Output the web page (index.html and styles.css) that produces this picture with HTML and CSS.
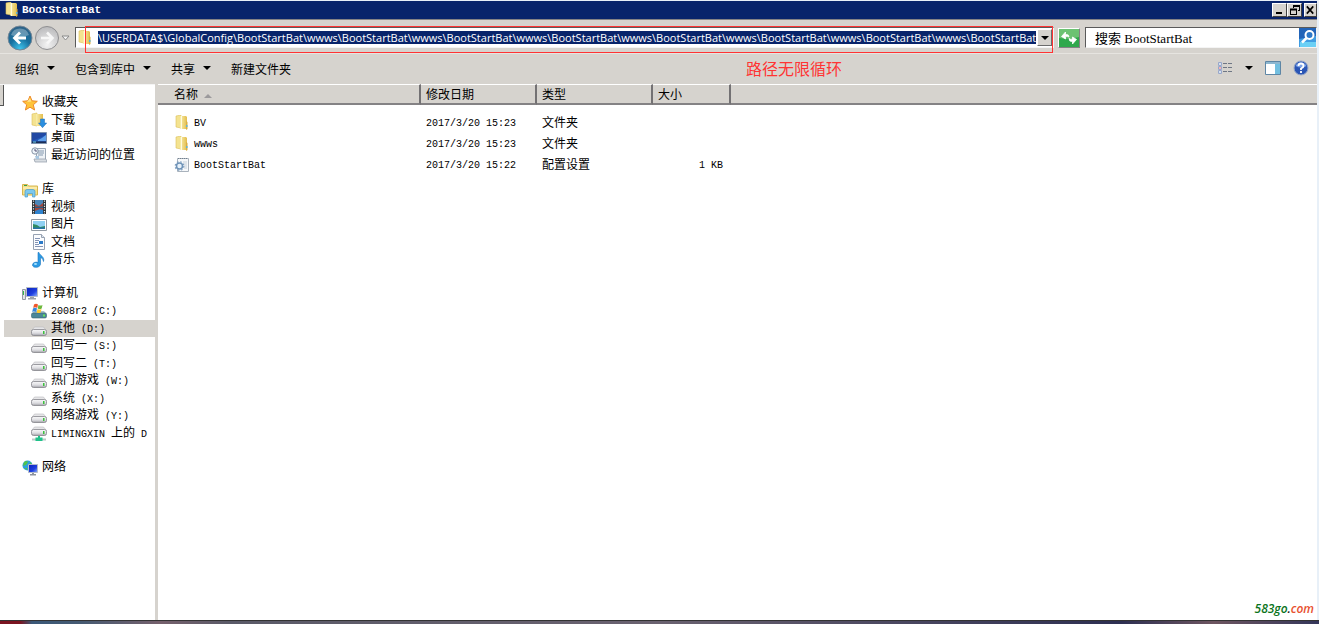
FILE: index.html
```html
<!DOCTYPE html>
<html lang="zh-CN">
  <head>
    <meta charset="utf-8">
    <title>BootStartBat</title>
    <link rel="stylesheet" href="styles.css">
  </head>

  <body>
    <svg class="sprite" aria-hidden="true">
      <defs>
        <linearGradient id="gold" x1="0" x2="1">
          <stop offset="0" stop-color="#f9efae"/><stop offset="1" stop-color="#e3bd4c"/>
        </linearGradient>
        <linearGradient id="metal" x1="0" y1="0" x2="0" y2="1">
          <stop offset="0" stop-color="#fafafb"/><stop offset=".6" stop-color="#dcdce0"/><stop offset="1" stop-color="#a2a2a8"/>
        </linearGradient>
        <linearGradient id="screen" x1="0" x2="1" y2="1">
          <stop offset="0" stop-color="#0a22b8"/><stop offset=".6" stop-color="#1f3fe0"/><stop offset="1" stop-color="#8fb4ff"/>
        </linearGradient>
        <radialGradient id="blueBall" cx=".5" cy=".95" r=".9">
          <stop offset="0" stop-color="#3fc4ec"/><stop offset=".5" stop-color="#17709f"/><stop offset="1" stop-color="#2c6288"/>
        </radialGradient>
        <radialGradient id="greyBall" cx=".5" cy=".8" r=".8">
          <stop offset="0" stop-color="#f2f2f2"/><stop offset="1" stop-color="#b9b9bb"/>
        </radialGradient>
      </defs>
      <symbol id="folder" viewBox="0 0 16 16">
        <path d="M2 1l5-1v13l-5-1z" fill="#f4e390" stroke="#dcc05a" stroke-width=".6"/>
        <path d="M6 1h6l1 1v12H7l-1-1z" fill="url(#gold)"/>
        <path d="M7.500 1v13" stroke="#fffbe0"/>
        <path d="M12 6l1.500 1v7L12 15z" fill="#d9ae43"/>
        <path d="M12 10h1.500v2H12z" fill="#5db3d8"/>
      </symbol>
      <symbol id="star" viewBox="0 0 16 16">
        <path d="M8 1l2 4.800 5.300.5-4 3.500 1.300 5.200L8 12.200 3.400 15l1.300-5.200-4-3.500L6 5.800z" fill="#ffc43a" stroke="#ee8a2a"/>
        <path d="M8 3l1.200 3.500L5 7z" fill="#ffe58a"/>
      </symbol>
      <symbol id="download" viewBox="0 0 16 16">
        <path d="M1 2l5-1v13l-5-1z" fill="#f4e390" stroke="#dcc05a" stroke-width=".6"/>
        <path d="M5 2h7v12H6l-1-1z" fill="url(#gold)"/>
        <path d="M9.500 7h4v4h2.200L11.500 15.700 7.500 11h2z" fill="#2b8fe0" stroke="#1c6fb8" stroke-width=".5"/>
      </symbol>
      <symbol id="desktop" viewBox="0 0 16 16">
        <path d="M.5 2.500h15v11H.5z" fill="#2458b8" stroke="#7c90ad"/>
        <path d="M1 3h14v2L1 11z" fill="#2149a4"/>
        <path d="M7 10c3-1 5-3 8-5v6H7z" fill="#5fa0ea"/>
        <path d="M1 11.500h14V13H1z" fill="#1d2f55"/>
        <path d="M2 12h3" stroke="#6fd3f0"/>
      </symbol>
      <symbol id="recent" viewBox="0 0 16 16">
        <path d="M5.500 1.500h9v11h-9z" fill="#eef2f6" stroke="#9aa7b5"/>
        <path d="M7 4h6M7 6h6M7 8h5" stroke="#8297ae"/>
        <circle cx="4" cy="4" r="3.200" fill="#eef4fa" stroke="#8794a5"/>
        <path d="M4 2v2h2" fill="none" stroke="#557"/>
        <path d="M3 12h12l1 3H4z" fill="#d8dde2" stroke="#8f9aa6" stroke-width=".7"/>
        <path d="M4 9h4v3H5z" fill="#a9c7e0"/>
      </symbol>
      <symbol id="library" viewBox="0 0 16 16">
        <path d="M.5 13V2.500h5l1 1.500h9v9z" fill="#f5e08a" stroke="#d7b64f"/>
        <path d="M2 3.500h3" stroke="#35a24b"/>
        <path d="M1 6h14" stroke="#fff6c8"/>
        <path d="M3 15V9.500Q3 7.500 5 7.500h6q2 0 2 2V15h-2.500v-3.500h-5V15z" fill="#7cc8ee" stroke="#4a9ccc" stroke-width=".7"/>
      </symbol>
      <symbol id="video" viewBox="0 0 16 16">
        <path d="M1 1h14v14H1z" fill="#2d3338"/>
        <path d="M4 1h8v6.500H4z" fill="#4b86b8"/><path d="M4 8.500h8V15H4z" fill="#2f83cf"/>
        <path d="M4 5l4 2 4-3v3.500H4zM4 12l5-2 3 1v-2H4z" fill="#a1483e"/>
        <path d="M2.500 1.500v14M13.500 1.500v14" stroke="#dfe5ea" stroke-width="1.200" stroke-dasharray="1.300 1.300"/>
      </symbol>
      <symbol id="picture" viewBox="0 0 16 16">
        <path d="M.5 2.500h15v11H.5z" fill="#fff" stroke="#929ba5"/>
        <path d="M2 4h12v8H2z" fill="#8fd0f2"/>
        <path d="M2 7l4 1 3 2 5-1v3H2z" fill="#2f8b62"/><path d="M2 10.500h12V12H2z" fill="#2673a8"/>
      </symbol>
      <symbol id="document" viewBox="0 0 16 16">
        <path d="M2.500.5h8l3 3v12h-11z" fill="#fbfcfe" stroke="#97a2b2"/>
        <path d="M10.500.5v3h3" fill="#dde6ef" stroke="#97a2b2"/>
        <path d="M4 4.500h5M4 6.500h4M4 8.500h3M4 10.500h4M4 12.500h8" stroke="#8494b4"/>
        <path d="M8 7h4v3H8z" fill="#2b7ac8"/>
      </symbol>
      <symbol id="music" viewBox="0 0 16 16">
        <path d="M8 .5c.5 3 6 4 4.500 9-.5-3-2-3.500-3-4V12c0 4-8 4.500-8 1 0-2.500 3.500-3.500 5.500-2.500V.5z" fill="#2c9be4" stroke="#1b76c0" stroke-width=".6"/>
        <ellipse cx="4.500" cy="12" rx="1.500" ry="1" fill="#a8e2ff"/>
      </symbol>
      <symbol id="computer" viewBox="0 0 16 16">
        <path d="M.5 3.500h3v10h-3z" fill="#e2e4e8" stroke="#9499a3"/>
        <path d="M1.500 5v4" stroke="#36b748"/>
        <path d="M4.500 1.500h11v9h-11z" fill="url(#screen)" stroke="#b5bcc9"/>
        <path d="M8 11h4v1h2v1.500H6V12h2z" fill="#9ba1aa"/>
      </symbol>
      <symbol id="drive" viewBox="0 0 16 16">
        <path d="M3.500 6h9l3 4H.5z" fill="#e6e6e8" stroke="#b8b8bc" stroke-width=".6"/>
        <rect x=".5" y="8.500" width="15" height="6" rx="2" fill="url(#metal)" stroke="#85858c" stroke-width=".8"/>
        <path d="M12 10h1.500v3H12z" fill="#3cc23c"/>
      </symbol>
      <symbol id="system" viewBox="0 0 16 16">
        <path d="M3 8h10l2.500 3H.5z" fill="#a7c3cf"/>
        <rect x=".5" y="10" width="15" height="5" rx="1.500" fill="#4a8798" stroke="#37616e" stroke-width=".6"/>
        <path d="M12 11.500h2v2h-2z" fill="#62e45b"/>
        <path d="M3 1.500q2-1.500 4 0l-.8 3.500q-2-1.500-4 0z" fill="#f0562a"/><path d="M7.500 2q2 1 4 0l-.8 3.500q-2 1-4 0z" fill="#6cb83c"/>
        <path d="M2 5.500q2-1.500 4 0L5.200 9q-2-1.500-4 0z" fill="#3587de"/><path d="M6.500 6q2 1 4 0l-.8 3.500q-2 1-4 0z" fill="#fcc82d"/>
      </symbol>
      <symbol id="netdrive" viewBox="0 0 16 16">
        <path d="M3.500 1h9l3 3.500H.5z" fill="#e6e6e8" stroke="#b8b8bc" stroke-width=".6"/>
        <rect x=".5" y="3.500" width="15" height="6" rx="2" fill="url(#metal)" stroke="#85858c" stroke-width=".8"/>
        <path d="M12 5h1.500v3H12z" fill="#3cc23c"/>
        <path d="M1 13.500h14" stroke="#b9c9c4" stroke-width="2"/>
        <path d="M7 10h2v1.500h2.500v3.500h-7v-3.500H7z" fill="#1fc28a"/>
      </symbol>
      <symbol id="network" viewBox="0 0 16 16">
        <circle cx="5.500" cy="5.500" r="5" fill="#2d9fe0"/>
        <path d="M2 2q3-2 4 0L4 5 1 6zM6 5l3-3 1 3-3 3zM2 8l3 0v2z" fill="#50c34c"/>
        <path d="M6.500 4.500h9v8h-9z" fill="url(#screen)" stroke="#b5bcc9"/>
        <path d="M10 13h2v1h2v1.500H8V14h2z" fill="#8d939d"/>
      </symbol>
      <symbol id="config" viewBox="0 0 16 16">
        <path d="M3.500 1.500h11v13h-11z" fill="#f6f8fa" stroke="#a9b2bc"/>
        <path d="M4 1.500h10" stroke="#72808e" stroke-dasharray="1 1"/>
        <path d="M9 5h4M10 7h3M10 9h3M10 11h3" stroke="#c6d0da"/>
        <circle cx="5.500" cy="9" r="4.300" fill="none" stroke="#84a3c2" stroke-width="1.200" stroke-dasharray="1.700 1.700"/>
        <circle cx="5.500" cy="9" r="3" fill="#e8f2fa" stroke="#6f93b8" stroke-width="1.500"/>
      </symbol>
    </svg>

    <div class="window">
      <header class="titlebar">
        <svg class="icon"><use href="#folder"/></svg>
        <h1>BootStartBat</h1>
        <div class="window-buttons">
          <button aria-label="最小化"><svg viewBox="0 0 12 10"><path d="M2 7h6v2H2z"/></svg></button>
          <button aria-label="还原"><svg viewBox="0 0 12 10"><path d="M4 0h7v6H9V5h1V2H5v1H4zM1 3.500h7V10H1zM2 5.500V9h5V5.500z" fill-rule="evenodd"/></svg></button>
          <button aria-label="关闭"><svg viewBox="0 0 12 10"><path d="M2 1l7 8M9 1L2 9" stroke="#000" stroke-width="1.800"/></svg></button>
        </div>
      </header>

      <div class="navbar">
        <div class="history">
          <button aria-label="后退">
            <svg viewBox="0 0 26 26"><circle cx="13" cy="13" r="12" fill="url(#blueBall)" stroke="#748696"/><path d="M4 10a9.500 9.500 0 0 1 18 0q-9 4-18 0z" fill="#fff" opacity=".3"/><path d="M19 13H8M13 7.500L7.500 13l5.500 5.500" fill="none" stroke="#fff" stroke-width="2.800"/></svg>
          </button>
          <button aria-label="前进">
            <svg viewBox="0 0 26 26"><circle cx="13" cy="13" r="11.500" fill="url(#greyBall)" stroke="#8f8f91"/><path d="M7 13h11M13 7.500l5.500 5.500-5.500 5.500" fill="none" stroke="#f7f7f7" stroke-width="2.500"/></svg>
          </button>
          <button class="recent-pages" aria-label="最近的页面">
            <svg viewBox="0 0 9 6"><path d="M1 1h7L4.500 5z" fill="#f4f4f4" stroke="#8a8a8a"/></svg>
          </button>
        </div>

        <div class="address">
          <svg class="icon"><use href="#folder"/></svg>
          <input type="text" aria-label="地址" value="\USERDATA$\GlobalConfig\BootStartBat\wwws\BootStartBat\wwws\BootStartBat\wwws\BootStartBat\wwws\BootStartBat\wwws\BootStartBat\wwws\BootStartBat\wwws\BootStartBat">
          <button class="drop" aria-label="以前的位置"><span class="arrow"></span></button>
          <div class="marker"></div>
        </div>

        <button class="refresh" aria-label="刷新">
          <svg viewBox="0 0 20 18"><path d="M0 0h20v18H0z" fill="#2fa84c"/><path d="M0 0h20v8Q10 11 0 9z" fill="#6cc272"/><path d="M2.500 7.500L6.500 3v2.500q3.500-.5 3.500 2.500-1.500-1-3.500-.5V10z" fill="#fff" stroke="#fff" stroke-width=".8"/><path d="M17.500 10.500L13.500 15v-2.500q-3.500.5-3.500-3 1.500 1 3.500.5V8z" fill="#fff" stroke="#fff" stroke-width=".8"/></svg>
        </button>

        <div class="search">
          <input type="text" class="search-text" aria-label="搜索" value="搜索 BootStartBat">
          <button aria-label="开始搜索">
            <svg viewBox="0 0 17 19"><path d="M0 0h17v19H0z" fill="#3f9ce2"/><path d="M0 0h17v8L0 11z" fill="#2264b8"/><path d="M1 14h16v5H1z" fill="#6bd0f5"/><circle cx="10.500" cy="7" r="4" fill="#2d78c8" stroke="#fff" stroke-width="2"/><path d="M7.500 10L3 14.500" stroke="#fff" stroke-width="2.500"/></svg>
          </button>
        </div>
      </div>

      <div class="toolbar">
        <button>组织<span class="arrow"></span></button>
        <button>包含到库中<span class="arrow"></span></button>
        <button>共享<span class="arrow"></span></button>
        <button>新建文件夹</button>
        <p class="note">路径无限循环</p>
        <div class="view-tools">
          <button aria-label="更改视图"><svg class="icon" viewBox="0 0 16 16"><path d="M1.500 2.500h3v3h-3zM1.500 6.500h3v3h-3zM1.500 10.500h3v3h-3z" fill="#fff" stroke="#98a7cb"/><path d="M2.500 8h1" stroke="#e33" stroke-width="1.500"/><path d="M2.500 4h1M2.500 12h1" stroke="#58b"/><path d="M6 3.500h4M11 3.500h4M6 7.500h4M11 7.500h4M6 11.500h4M11 11.500h4" stroke="#6f7785"/></svg></button>
          <button aria-label="更多选项"><span class="arrow"></span></button>
          <button aria-label="显示预览窗格"><svg class="icon" viewBox="0 0 16 16"><path d="M.5 1.500h15v13H.5z" fill="#fff" stroke="#5e86a5"/><path d="M1 3h14" stroke="#8db7d0" stroke-width="2"/><path d="M10 4h5v10h-5z" fill="#72bfe0"/></svg></button>
          <button aria-label="获取帮助"><svg class="icon" viewBox="0 0 16 16"><circle cx="8" cy="8" r="7" fill="#2a55b5" stroke="#9aa9c8"/><path d="M2.500 6a6 6 0 0 1 11 0q-5 3-11 0z" fill="#7ba1e6"/><path d="M5.500 6q0-2.500 2.500-2.500T10.500 6Q10.500 7.500 8 8.500v1.500M8 11v2" fill="none" stroke="#fff" stroke-width="1.800"/></svg></button>
        </div>
      </div>

      <div class="content">
        <nav class="sidebar">
          <ul>
            <li class="root"><svg class="icon"><use href="#star"/></svg><a href="#">收藏夹</a></li>
            <li><svg class="icon"><use href="#download"/></svg><a href="#">下载</a></li>
            <li><svg class="icon"><use href="#desktop"/></svg><a href="#">桌面</a></li>
            <li><svg class="icon"><use href="#recent"/></svg><a href="#">最近访问的位置</a></li>
          </ul>
          <ul>
            <li class="root"><svg class="icon"><use href="#library"/></svg><a href="#">库</a></li>
            <li><svg class="icon"><use href="#video"/></svg><a href="#">视频</a></li>
            <li><svg class="icon"><use href="#picture"/></svg><a href="#">图片</a></li>
            <li><svg class="icon"><use href="#document"/></svg><a href="#">文档</a></li>
            <li><svg class="icon"><use href="#music"/></svg><a href="#">音乐</a></li>
          </ul>
          <ul>
            <li class="root"><svg class="icon"><use href="#computer"/></svg><a href="#">计算机</a></li>
            <li><svg class="icon"><use href="#system"/></svg><a href="#"><span class="mono">2008r2 (C:)</span></a></li>
            <li class="selected"><svg class="icon"><use href="#drive"/></svg><a href="#">其他<span class="mono"> (D:)</span></a></li>
            <li><svg class="icon"><use href="#drive"/></svg><a href="#">回写一<span class="mono"> (S:)</span></a></li>
            <li><svg class="icon"><use href="#drive"/></svg><a href="#">回写二<span class="mono"> (T:)</span></a></li>
            <li><svg class="icon"><use href="#drive"/></svg><a href="#">热门游戏<span class="mono"> (W:)</span></a></li>
            <li><svg class="icon"><use href="#drive"/></svg><a href="#">系统<span class="mono"> (X:)</span></a></li>
            <li><svg class="icon"><use href="#drive"/></svg><a href="#">网络游戏<span class="mono"> (Y:)</span></a></li>
            <li><svg class="icon"><use href="#netdrive"/></svg><a href="#"><span class="mono">LIMINGXIN </span>上的<span class="mono"> D</span></a></li>
          </ul>
          <ul>
            <li class="root"><svg class="icon"><use href="#network"/></svg><a href="#">网络</a></li>
          </ul>
        </nav>

        <main class="files">
          <table>
            <colgroup>
              <col class="col-name"><col class="col-date"><col class="col-type"><col class="col-size"><col>
            </colgroup>
            <thead>
              <tr><th>名称<span class="sort"></span></th><th>修改日期</th><th>类型</th><th>大小</th><th class="rest"></th></tr>
            </thead>
            <tbody>
              <tr><td><div class="file"><svg class="icon"><use href="#folder"/></svg><span class="mono">BV</span></div></td><td class="mono">2017/3/20 15:23</td><td>文件夹</td><td></td><td></td></tr>
              <tr><td><div class="file"><svg class="icon"><use href="#folder"/></svg><span class="mono">wwws</span></div></td><td class="mono">2017/3/20 15:23</td><td>文件夹</td><td></td><td></td></tr>
              <tr><td><div class="file"><svg class="icon"><use href="#config"/></svg><span class="mono">BootStartBat</span></div></td><td class="mono">2017/3/20 15:22</td><td>配置设置</td><td class="mono size">1 KB</td><td></td></tr>
            </tbody>
          </table>
          <p class="watermark">583go<span class="dot">.</span><span class="com">com</span></p>
        </main>
      </div>
    </div>
    <div class="desktop-strip"></div>
  </body>
</html>
```
FILE: styles.css
```css
* {
  box-sizing: border-box;
}

body {
  margin: 0;
  min-height: 100vh;
  display: flex;
  flex-direction: column;
  background-color: #e8f0f8;
  color: #000;
  font-family: "Liberation Sans", "Noto Sans CJK SC", sans-serif;
  font-size: 12px;
}

h1, p, ul {
  margin: 0;
  padding: 0;
}

button {
  display: flex;
  align-items: center;
  justify-content: center;
  margin: 0;
  padding: 0;
  border: none;
  background: none;
  color: #000;
  font: inherit;
}

input {
  min-width: 0;
  border: none;
  padding: 0;
  outline: none;
}

.sprite {
  position: absolute;
  width: 0;
  height: 0;
}

.icon {
  display: block;
  flex: none;
  width: 16px;
  height: 16px;
}

.mono {
  font-family: "Liberation Mono", monospace;
  font-size: 10px;
  white-space: pre;
}

.arrow {
  border: 4px solid transparent;
  border-top-color: #000;
  border-bottom: none;
}

.window {
  flex: 1;
  display: flex;
  flex-direction: column;
  margin-top: 1px;
  margin-right: 2px;
  background-color: #d6d3ce;
}

/* title bar */
.titlebar {
  display: flex;
  align-items: center;
  height: 18px;
  padding-left: 4px;
  background-color: #08246b;
}

.titlebar h1 {
  flex: 1;
  margin-left: 2px;
  color: #fff;
  font-family: "Liberation Mono", monospace;
  font-size: 11px;
  font-weight: bold;
}

.window-buttons {
  display: flex;
}

.window-buttons button {
  width: 15px;
  height: 14px;
  border: 1px solid;
  border-color: #fff #404040 #404040 #fff;
  background-color: #d6d3ce;
}

.window-buttons button:last-child {
  width: 13px;
  margin-left: 2px;
}

.window-buttons svg {
  width: 12px;
  height: 10px;
}

/* address and search */
.navbar {
  display: flex;
  align-items: center;
  height: 35px;
  padding: 2px 0 0 7px;
  border-top: 1px solid #848284;
  border-bottom: 1px solid #e6e4e0;
}

.history {
  display: flex;
  align-items: center;
  width: 68px;
  gap: 1px;
}

.history svg {
  width: 26px;
  height: 26px;
}

.history .recent-pages svg {
  width: 9px;
  height: 6px;
}

.address {
  position: relative;
  flex: 1;
  display: flex;
  align-items: center;
  height: 21px;
  padding: 1px;
  border: 1px solid;
  border-color: #5a5a5a #f4f4f4 #f4f4f4 #5a5a5a;
  background-color: #fff;
}

.address input {
  flex: 1;
  height: 13px;
  margin-left: 5px;
  background-color: #08246b;
  color: #fff;
  font-family: "Open Sans", sans-serif;
  font-size: 11px;
  line-height: 13px;
}

.address .drop {
  width: 15px;
  height: 17px;
  margin-left: 1px;
  border: 1px solid;
  border-color: #fff #6b6b6b #6b6b6b #fff;
  background-color: #d6d3ce;
}

.marker {
  position: absolute;
  top: -2px;
  right: 0;
  bottom: -6px;
  left: 9px;
  border: 1px solid #ff3333;
  pointer-events: none;
}

.refresh {
  width: 22px;
  height: 20px;
  margin: 0 5px 0 4px;
  border: 1px solid;
  border-color: #fff #848284 #848284 #fff;
}

.refresh svg {
  width: 20px;
  height: 18px;
}

.search {
  display: flex;
  align-items: center;
  width: 232px;
  height: 21px;
  border: 1px solid;
  border-color: #5a5a5a #f4f4f4 #f4f4f4 #5a5a5a;
  background-color: #fff;
}

.search-text {
  flex: 1;
  height: 19px;
  padding-left: 9px;
  font-family: "Liberation Serif", "Noto Sans CJK SC", serif;
  font-size: 13px;
}

.search svg {
  width: 17px;
  height: 19px;
}

/* toolbar */
.toolbar {
  position: relative;
  display: flex;
  align-items: center;
  gap: 20px;
  height: 30px;
  padding: 0 8px 2px 15px;
}

.toolbar button {
  gap: 8px;
}

.note {
  position: absolute;
  top: 6px;
  left: 746px;
  color: #ff3333;
  font-size: 16px;
  line-height: 20px;
}

.view-tools {
  display: flex;
  align-items: center;
  gap: 12px;
  margin-left: auto;
}

/* folder tree */
.content {
  flex: 1;
  display: flex;
}

.sidebar {
  position: relative;
  display: flex;
  flex-direction: column;
  gap: 17px;
  width: 155px;
  padding: 9px 0 0 4px;
  border-top: 1px solid #f4f4f4;
  background-color: #fff;
}

/* edge of the window behind */
.sidebar::before {
  content: "";
  position: absolute;
  top: 0;
  left: 0;
  width: 3px;
  height: 20px;
  border-right: 1px solid #555;
  border-bottom: 1px solid #555;
  background-color: #d6d3ce;
}

.sidebar ul {
  list-style: none;
}

.sidebar li {
  display: flex;
  align-items: center;
  gap: 4px;
  height: 17px;
  padding-left: 27px;
  white-space: nowrap;
}

.sidebar li:nth-child(even) {
  height: 18px;
}

.sidebar li.root {
  padding-left: 18px;
}

.sidebar li.selected {
  background-color: #d6d3ce;
}

.sidebar a {
  color: #000;
  line-height: 17px;
  text-decoration: none;
}

/* file list */
.files {
  flex: 1;
  display: flex;
  flex-direction: column;
  margin-left: 3px;
  background-color: #fff;
}

.files table {
  width: 100%;
  border-collapse: separate;
  border-spacing: 0;
  table-layout: fixed;
}

.col-name {
  width: 263px;
}

.col-date, .col-type {
  width: 116px;
}

.col-size {
  width: 78px;
}

.files th {
  height: 21px;
  padding: 2px 0 0 5px;
  border-top: 1px solid #fff;
  border-right: 2px solid #737173;
  border-bottom: 2px solid #848284;
  background-color: #d6d3ce;
  font-weight: normal;
  line-height: 16px;
  text-align: left;
}

.files th:first-child {
  padding-left: 16px;
}

.files th.rest {
  border-right: none;
}

.sort {
  display: inline-block;
  margin-left: 6px;
  border: 4px solid transparent;
  border-top: none;
  border-bottom-color: #9c9a9c;
  vertical-align: middle;
}

.files tbody::before {
  content: "";
  display: block;
  height: 7px;
}

.files td {
  height: 21px;
  padding: 1px 0 0 5px;
  line-height: 17px;
}

.files td:first-child {
  padding-left: 16px;
}

.files td.size {
  padding-right: 8px;
  text-align: right;
}

.file {
  display: flex;
  align-items: center;
  gap: 4px;
}

.watermark {
  margin: auto 3px 3px auto;
  color: #0a7320;
  font-family: "Open Sans", sans-serif;
  font-size: 12px;
  font-style: italic;
  font-weight: 600;
  line-height: 16px;
}

.watermark .dot {
  color: #222;
}

.watermark .com {
  color: #e8502f;
}

.desktop-strip {
  height: 4px;
  border-top: 1px solid #333;
  background: linear-gradient(to right, #7a1420 0, #7a1420 20px, #3a5878 32px, #455a72 80px, #75606c 160px, #5a5a68 230px, #6a6270 50%, #2d2f52 85%, #6d5560 92%, #34365a);
}
```
